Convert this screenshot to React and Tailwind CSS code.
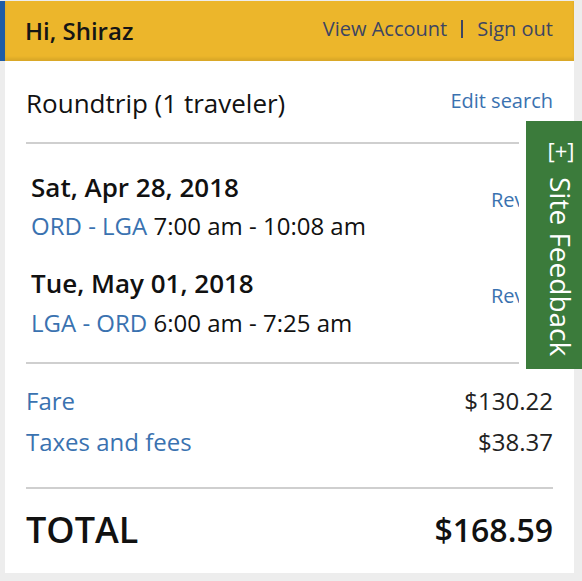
import React from "react";

function Divider() {
  return <div className="h-[2px] bg-[#cfcfcf]" />;
}

export default function App() {
  return (
    <div
      className="relative w-[582px] h-[581px] overflow-hidden bg-[#ededed] pt-px"
      style={{ fontFamily: '"Open Sans", "Noto Sans", sans-serif' }}
    >
      {/* header */}
      <div className="w-[574px] h-[60px] border-l-[5px] border-[#1f5ca6] bg-[#ecb62b] flex items-center justify-between pl-[20px] pr-[21px] shadow-[inset_0_-3px_3px_rgba(0,0,0,0.08)]">
        <div className="text-[24px] font-semibold text-[#151515] leading-none">Hi, Shiraz</div>
        <div className="flex items-center text-[20px] text-[#3d4562] leading-none -mt-[5px]">
          <span>View Account</span>
          <span className="mx-[14px] w-[2px] h-[18px] bg-[#3d4562]" />
          <span>Sign out</span>
        </div>
      </div>

      {/* card */}
      <div className="ml-[5px] w-[569px] h-[512px] bg-white px-[21px] text-[#111]">
        <div className="flex items-center justify-between pt-[26px] pb-[23px] h-[81px]">
          <span className="text-[26px] leading-[32px]">Roundtrip (1 traveler)</span>
          <span className="text-[20px] leading-[28px] text-[#3a72b0] -mt-[5px]">Edit search</span>
        </div>
        <Divider />

        <div className="pt-[27px] pb-[24px] pl-[5px]">
          <div className="flex justify-between">
            <div>
              <div className="text-[26px] font-semibold leading-[32px]">Sat, Apr 28, 2018</div>
              <div className="text-[24px] leading-[30px] mt-[8px]">
                <span className="text-[#3a72b0]">ORD - LGA</span> 7:00 am - 10:08 am
              </div>
            </div>
            <div className="text-[20px] leading-[24px] text-[#3a72b0] pt-[17px] w-[62px]">Review</div>
          </div>
          <div className="flex justify-between mt-[26px]">
            <div>
              <div className="text-[26px] font-semibold leading-[32px]">Tue, May 01, 2018</div>
              <div className="text-[24px] leading-[30px] mt-[9px]">
                <span className="text-[#3a72b0]">LGA - ORD</span> 6:00 am - 7:25 am
              </div>
            </div>
            <div className="text-[20px] leading-[24px] text-[#3a72b0] pt-[17px] w-[62px]">Review</div>
          </div>
        </div>
        <Divider />

        <div className="pt-[22px] pb-[30px] text-[24px] leading-[30px]">
          <div className="flex justify-between">
            <span className="text-[#3a72b0]">Fare</span>
            <span className="text-[#222]">$130.22</span>
          </div>
          <div className="flex justify-between mt-[11px]">
            <span className="text-[#3a72b0]">Taxes and fees</span>
            <span className="text-[#222]">$38.37</span>
          </div>
        </div>
        <Divider />

        <div className="flex items-center justify-between pt-[21px]">
          <span className="text-[36px] font-semibold leading-[40px]">TOTAL</span>
          <span className="text-[32px] font-semibold leading-[40px]">$168.59</span>
        </div>
      </div>

      {/* feedback tab */}
      <div className="absolute right-0 top-[121px] w-[63px] h-[248px] border-l-[7px] border-white bg-[#3b7b3b] text-white flex flex-col items-center pt-[16px] pl-[14px]">
        <div className="text-[22px] leading-[26px]">[+]</div>
        <div className="text-[28px] leading-[32px] mt-[14px] [writing-mode:vertical-rl]">Site Feedback</div>
      </div>
    </div>
  );
}
